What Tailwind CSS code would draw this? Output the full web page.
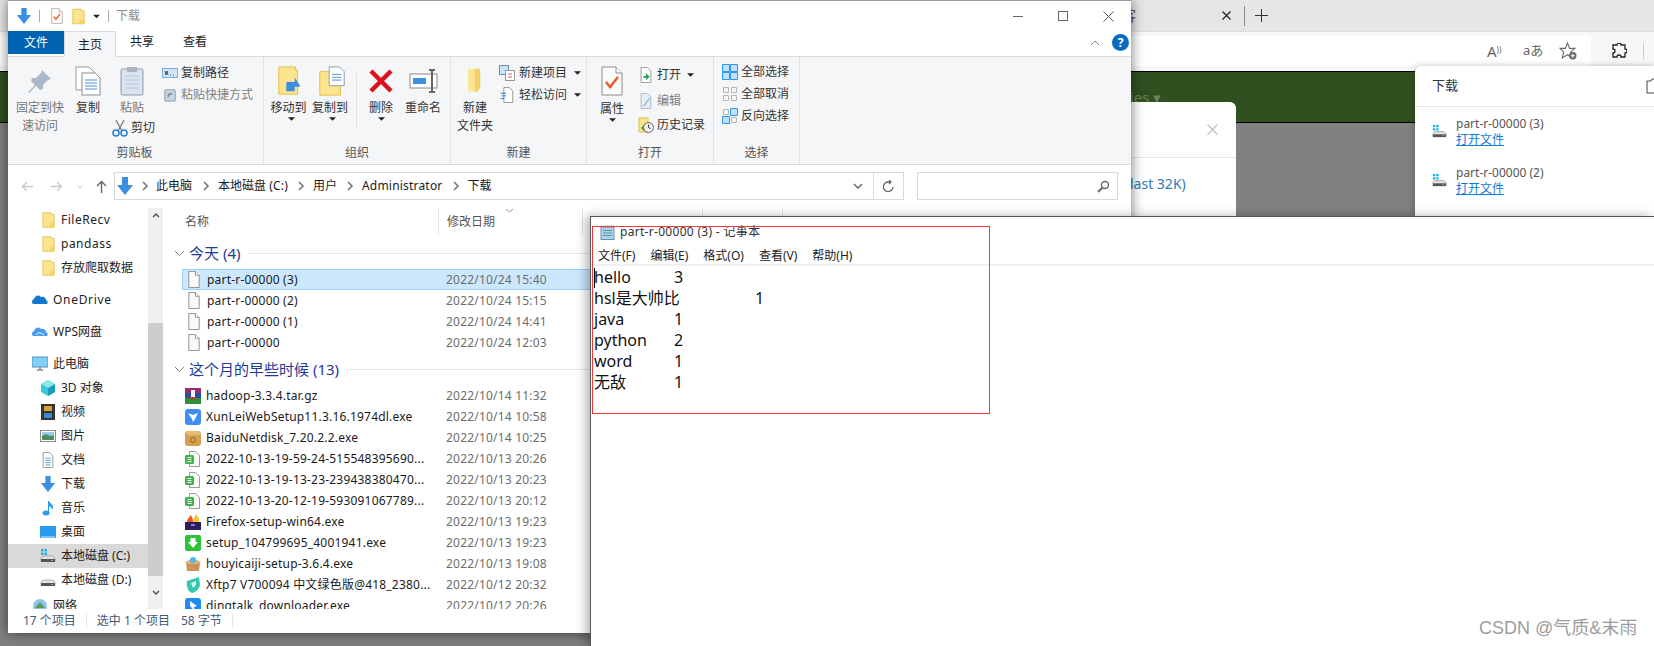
<!DOCTYPE html>
<html lang="zh-CN">
<head>
  <meta charset="UTF-8">
  <title>下载</title>
  <script src="https://cdn.jsdelivr.net/npm/@tailwindcss/browser@4"></script>
</head>
<body class="relative w-[1654px] h-[646px] overflow-hidden bg-[#808080] text-[12px] text-[#1a1a1a] font-['Noto_Sans','Noto_Sans_CJK_SC',sans-serif]">

  <!-- shared icons -->
  <svg class="hidden">
    <defs>
      <symbol id="arrow" viewBox="0 0 16 18"><path d="M5 0h6v8h5l-8 10-8-10h5z" fill="#3b8fe0"/></symbol>
      <symbol id="folder" viewBox="0 0 16 20"><path d="M1 1h10l0 2h4v16H1z" fill="#fde58f" stroke="#e2bb3f"/><path d="M10 14h5v5h-5z" fill="#f7cf5d"/></symbol>
      <symbol id="doc" viewBox="0 0 14 18"><path d="M1.500.5h7l4 4v13h-11z" fill="#f9f9f9" stroke="#8f8f8f"/><path d="M8.500.5v4h4" fill="#fff" stroke="#8f8f8f"/></symbol>
      <symbol id="sheet" viewBox="0 0 16 16"><path d="M4.500.5h6l4 4v11h-10z" fill="#fafafa" stroke="#9a9a9a"/><rect x="0" y="4" width="9" height="9" rx="1.500" fill="#3fb44d"/><path d="M2.500 6.500h4M2.500 8.500h4M2.500 10.500h4" stroke="#fff" stroke-width="1"/></symbol>
      <symbol id="caret" viewBox="0 0 8 4"><path d="M0 0h8L4 4z" fill="#222"/></symbol>
      <symbol id="chev" viewBox="0 0 8 10"><path d="M2 1l4 4-4 4" fill="none" stroke="#777" stroke-width="1.600"/></symbol>
      <symbol id="drive" viewBox="0 0 16 16"><path d="M1 10l2-2h10l2 2v3H1z" fill="#e2e2e2" stroke="#888" stroke-width=".6"/><path d="M1 11h14v3H1z" fill="#555"/><path d="M11 12h2v1h-2z" fill="#4fd34f"/></symbol>
      <symbol id="drivewin" viewBox="0 0 16 16"><path d="M1 1h2.500v2.500H1zM4.500 1H7v2.500H4.500zM1 4.500h2.500V7H1zM4.500 4.500H7V7H4.500z" fill="#14b4f0"/><path d="M1 10l2-2h10l2 2v3H1z" fill="#e2e2e2" stroke="#888" stroke-width=".6"/><path d="M1 11h14v3H1z" fill="#555"/><path d="M11 12h2v1h-2z" fill="#4fd34f"/></symbol>
      <symbol id="check" viewBox="0 0 22 30"><path d="M1 1h14l6 6v22H1z" fill="#fbfbfb" stroke="#8a8a8a"/><path d="M15 1v6h6" fill="#fff" stroke="#8a8a8a"/><path d="M5 16l4 5 8-10" fill="none" stroke="#f0571e" stroke-width="2.400"/></symbol>
      <symbol id="grid4" viewBox="0 0 16 16"><path d="M.5.500h7v7h-7zM8.500.500h7v7h-7zM.5 8.500h7v7h-7zM8.500 8.500h7v7h-7z" fill="#bfe0fb" stroke="#2f96ea"/></symbol>
      <symbol id="gridoff" viewBox="0 0 16 16"><path d="M1.500 1.500h5v5h-5zM9.500 1.500h5v5h-5zM1.500 9.500h5v5h-5zM9.500 9.500h5v5h-5z" fill="none" stroke="#b5b5b5"/></symbol>
      <symbol id="gridinv" viewBox="0 0 16 16"><path d="M1.500 1.500h5v5h-5zM9.500 9.500h5v5h-5z" fill="none" stroke="#b5b5b5"/><path d="M8.500.500h7v7h-7zM.5 8.500h7v7h-7z" fill="#bfe0fb" stroke="#2f96ea"/></symbol>
    </defs>
  </svg>

  <!-- browser behind the windows -->
  <div class="flex flex-col h-full">
    <div class="h-[32px] shrink-0 bg-[#e6e6e6] border-b border-[#dcdcdc] flex items-center pl-[1222px]">
      <span class="w-[14px] text-[14px] leading-none ml-[-100px] mr-[86px] text-[#555]">客</span>
      <svg class="size-[9px]" viewBox="0 0 9 9"><path d="M.5.500l8 8M8.500.500l-8 8" stroke="#222" stroke-width="1.300"/></svg>
      <span class="w-px h-[20px] bg-[#8a8a8a] ml-[13px]"></span>
      <svg class="size-[13px] ml-[10px]" viewBox="0 0 13 13"><path d="M6.500 0v13M0 6.500h13" stroke="#333"/></svg>
    </div>
    <div class="h-[39px] shrink-0 bg-[#f7f7f7] flex items-start pt-[4px]">
      <div class="w-[1591px] h-[30px] bg-white rounded-[4px] flex items-center justify-end pr-[14px] gap-[18px] text-[#666]">
        <span class="text-[15px] w-[18px] whitespace-nowrap">A<sup class="text-[8px]">))</sup></span>
        <span class="text-[13px] w-[18px] whitespace-nowrap">aあ</span>
        <svg class="size-[18px]" viewBox="0 0 17 17"><path d="M8 1l2 5h5l-4 3.500 1.500 5.500L8 12l-5 3 1.500-5.500L1 6h5z" fill="none" stroke="#666"/><circle cx="13" cy="13" r="3.500" fill="#666"/><path d="M11 13h4M13 11v4" stroke="#fff"/></svg>
      </div>
      <svg class="size-[16px] ml-[20px] mt-[7px]" viewBox="0 0 16 16"><path d="M6 2a2 2 0 0 1 4 0h4v4a2 2 0 0 1 0 4v4h-4a2 2 0 0 0-4 0H2v-4a2 2 0 0 0 0-4V2z" fill="none" stroke="#222" stroke-width="1.300"/></svg>
      <span class="w-px h-[16px] bg-[#ccc] ml-[16px] mt-[7px]"></span>
    </div>
    <div class="h-[52px] shrink-0 bg-[#30501f] border-y border-black flex items-center pl-[1130px] text-[#6d8060] text-[15px]">ies ▾</div>
    <div class="flex-1 bg-[#808080]"></div>
  </div>

  <!-- dialog on the site -->
  <div class="absolute left-[1000px] top-[102px] w-[236px] h-[120px] bg-white rounded-t-[6px] flex flex-col">
    <div class="h-[56px] border-b border-[#e5e5e5] flex items-center justify-end pr-[18px] text-[#c8c8c8]">
      <svg class="size-[11px]" viewBox="0 0 11 11"><path d="M.5.500l10 10M10.500.500l-10 10" stroke="#c4c4c4" stroke-width="1.500"/></svg>
    </div>
    <div class="pl-[130px] pt-[15px] text-[14px] text-[#337ab7]">last 32K)</div>
  </div>

  <!-- browser downloads panel -->
  <div class="absolute left-[1415px] top-[66px] right-0 h-[150px] bg-white rounded-tl-[6px] shadow-[0_0_6px_rgba(0,0,0,0.25)] flex flex-col">
    <div class="h-[41px] shrink-0 border-b border-[#e5e5e5] flex items-center justify-between pl-[17px] text-[13px] text-[#333]">
      <span>下载</span>
      <svg class="size-[16px] mr-[-8px]" viewBox="0 0 16 16"><path d="M1 3h4l1-2h6v14H1z" fill="none" stroke="#444"/></svg>
    </div>
    <div class="flex items-center gap-[9px] pl-[17px] h-[49px] shrink-0">
      <svg class="size-[15px]"><use href="#drivewin"/></svg>
      <div class="flex flex-col leading-[16px] text-[12px] text-[#555]">
        <span>part-r-00000 (3)</span>
        <span class="text-[#0f7ad8] underline w-fit">打开文件</span>
      </div>
    </div>
    <div class="flex items-center gap-[9px] pl-[17px] h-[49px] shrink-0">
      <svg class="size-[15px]"><use href="#drivewin"/></svg>
      <div class="flex flex-col leading-[16px] text-[12px] text-[#555]">
        <span>part-r-00000 (2)</span>
        <span class="text-[#0f7ad8] underline w-fit">打开文件</span>
      </div>
    </div>
  </div>

  <!-- file explorer -->
  <div class="absolute left-[8px] top-0 w-[1123px] h-[633px] bg-white border-t border-[#9a9a9a] shadow-[0_0_12px_rgba(0,0,0,0.55)] flex flex-col overflow-hidden">

    <!-- title bar -->
    <div class="h-[30px] shrink-0 flex items-center relative">
      <svg class="size-[16px] ml-[8px]"><use href="#arrow"/></svg>
      <span class="w-px h-[12px] bg-[#aaa] ml-[7px]"></span>
      <svg class="w-[12px] h-[16px] ml-[11px]"><use href="#check"/></svg>
      <svg class="w-[13px] h-[17px] ml-[9px]"><use href="#folder"/></svg>
      <svg class="w-[7px] h-[5px] ml-[8px]"><use href="#caret"/></svg>
      <span class="w-px h-[12px] bg-[#aaa] ml-[8px]"></span>
      <span class="ml-[7px] text-[#8a8a8a]">下载</span>
      <div class="ml-auto flex items-center gap-[35px] pr-[17px]">
        <span class="w-[10px] h-px bg-[#666]"></span>
        <span class="size-[10px] border border-[#666]"></span>
        <svg class="size-[11px]" viewBox="0 0 11 11"><path d="M.5.500l10 10M10.500.500l-10 10" stroke="#555"/></svg>
      </div>
    </div>

    <!-- ribbon tabs -->
    <div class="h-[26px] shrink-0 flex border-b border-[#dadbdc] relative">
      <div class="w-[56px] h-[23px] bg-[#0063b1] text-white flex items-center justify-center">文件</div>
      <div class="w-[52px] h-[26px] bg-[#f5f6f7] border-x border-t border-[#dadbdc] flex items-center justify-center">主页</div>
      <div class="w-[52px] flex items-center justify-center pb-[3px]">共享</div>
      <div class="w-[54px] flex items-center justify-center pb-[3px]">查看</div>
      <div class="ml-auto flex items-center gap-[12px] pr-[2px] pb-[2px]">
        <svg class="w-[10px] h-[6px]" viewBox="0 0 10 6"><path d="M1 5l4-4 4 4" fill="none" stroke="#888"/></svg>
        <span class="size-[17px] rounded-full bg-[#0a6cc0] text-white text-[12px] font-bold flex items-center justify-center">?</span>
      </div>
    </div>

    <!-- ribbon -->
    <div class="h-[108px] shrink-0 bg-[#f5f6f7] border-b border-[#dadbdc] flex text-[12px] leading-[18px] text-[#333]">

      <!-- clipboard group -->
      <div class="w-[256px] border-r border-[#e1e2e3] flex flex-col">
        <div class="h-[87px] flex pl-[6px] pt-[6px]">
          <div class="w-[52px] flex flex-col items-center text-[#777]">
            <svg class="size-[36px] p-[6px]" viewBox="0 0 24 24"><path d="M14 1l9 9-3 1-5 5 0 4-3 1-4-4-7 7-1-1 7-7-4-4 1-3 4 0 5-5z" fill="#a9b7c9"/></svg>
            <span class="whitespace-nowrap">固定到快</span><span>速访问</span>
          </div>
          <div class="w-[44px] flex flex-col items-center">
            <svg class="size-[36px] p-[3px]" viewBox="0 0 26 30"><path d="M1 1h13l5 5v18H1z" fill="#fff" stroke="#9a9a9a"/><path d="M7 7h13l5 5v17H7z" fill="#fff" stroke="#8a8a8a"/><path d="M10 14h12M10 17h12M10 20h12M10 23h12" stroke="#4c8fe0"/></svg>
            <span>复制</span>
          </div>
          <div class="w-[44px] flex flex-col items-center text-[#777]">
            <svg class="size-[36px] p-[3px]" viewBox="0 0 24 30"><rect x="1" y="3" width="22" height="26" rx="2" fill="#dbe3ee" stroke="#8d99a8"/><rect x="7" y="1" width="10" height="5" fill="#aab4c2"/><path d="M5 10h14M5 14h14M5 18h14M5 22h14" stroke="#b3c8e2"/></svg>
            <span>粘贴</span>
            <div class="flex items-center gap-[2px] mt-[2px] text-[#333] whitespace-nowrap ml-[2px]">
              <svg class="size-[18px]" viewBox="0 0 18 18"><path d="M5 1l6 11M13 1L7 12" stroke="#777" stroke-width="1.300"/><circle cx="5" cy="14" r="3" fill="none" stroke="#2b7fd0" stroke-width="1.600"/><circle cx="13" cy="14" r="3" fill="none" stroke="#2b7fd0" stroke-width="1.600"/></svg>
              <span>剪切</span>
            </div>
          </div>
          <div class="ml-[8px] mt-[-1px] flex flex-col">
            <div class="h-[22px] flex items-center gap-[3px]">
              <svg class="w-[16px] h-[10px]" viewBox="0 0 16 10"><rect x=".5" y=".5" width="15" height="9" fill="#cfe6fa" stroke="#7aaedb"/><path d="M3 3l1 4 1-4 1 4M8 7h1M11 7h1" stroke="#333" stroke-width=".8" fill="none"/></svg>
              <span>复制路径</span>
            </div>
            <div class="h-[22px] flex items-center gap-[3px] text-[#808080]">
              <svg class="w-[16px] h-[16px] p-px" viewBox="0 0 14 16"><rect x="1" y="2" width="12" height="13" rx="1" fill="#c9d3df" stroke="#8b97a6"/><path d="M5 11V7h4M6 8l3-2" stroke="#5e7286" fill="none"/></svg>
              <span class="whitespace-nowrap">粘贴快捷方式</span>
            </div>
          </div>
        </div>
        <div class="text-center text-[#555] ml-[-2px]">剪贴板</div>
      </div>

      <!-- organise group -->
      <div class="w-[187px] border-r border-[#e1e2e3] flex flex-col">
        <div class="h-[87px] flex pl-[5px] pt-[6px]">
          <div class="w-[44px] flex flex-col items-center">
            <svg class="size-[36px] p-[3px]" viewBox="0 0 30 32"><path d="M2 1h18v4h2v25H2z" fill="#fde58f" stroke="#e2bb3f"/><path d="M15 18h6v-5h9v10h-9v5z" transform="rotate(180 20 20)" fill="#3b8fe0"/></svg>
            <span class="mr-[5px] whitespace-nowrap">移动到</span>
            <svg class="w-[7px] h-[4px]"><use href="#caret"/></svg>
          </div>
          <div class="w-[38px] flex flex-col items-center">
            <svg class="size-[36px] p-[3px]" viewBox="0 0 30 32"><path d="M2 6h22v25H2z" fill="#fde58f" stroke="#e2bb3f"/><path d="M12 1h11l5 5v15H12z" fill="#fff" stroke="#8a9bb0"/><path d="M15 9h10M15 12h10M15 15h10" stroke="#4c8fe0"/></svg>
            <span class="mr-[4px] whitespace-nowrap">复制到</span>
            <svg class="w-[7px] h-[4px]"><use href="#caret"/></svg>
          </div>
          <span class="w-px h-[55px] bg-[#e1e2e3] ml-[5px] mt-[10px]"></span>
          <div class="w-[44px] ml-[2px] flex flex-col items-center">
            <svg class="size-[36px] p-[5px]" viewBox="0 0 26 26"><path d="M3 3l20 20M23 3L3 23" stroke="#dc0f1d" stroke-width="4.500"/></svg>
            <span>删除</span>
            <svg class="w-[7px] h-[4px]"><use href="#caret"/></svg>
          </div>
          <div class="w-[40px] flex flex-col items-center">
            <svg class="size-[36px]" viewBox="0 0 36 36"><rect x="5" y="11" width="27" height="14" fill="#fff" stroke="#8a8a8a"/><rect x="8" y="15" width="13" height="6" fill="#3b93e0"/><path d="M24 7h6M27 7v22M24 29h6" stroke="#666" stroke-width="2"/></svg>
            <span class="whitespace-nowrap">重命名</span>
          </div>
        </div>
        <div class="text-center text-[#555]">组织</div>
      </div>

      <!-- new group -->
      <div class="w-[136px] border-r border-[#e1e2e3] flex flex-col">
        <div class="h-[87px] flex pl-[2px] pt-[6px]">
          <div class="w-[44px] flex flex-col items-center">
            <svg class="size-[36px] p-[5px]" viewBox="0 0 24 30"><path d="M4 1h12l0 26H4z" fill="#fde58f"/><path d="M12 1h6v22l-6 6z" fill="#f6cf66"/></svg>
            <span>新建</span><span class="whitespace-nowrap">文件夹</span>
          </div>
          <div class="ml-[2px] mt-[-1px] flex flex-col">
            <div class="h-[22px] flex items-center gap-[4px]">
              <svg class="size-[16px]" viewBox="0 0 16 16"><rect x=".5" y=".5" width="9" height="9" fill="#cfe3f6" stroke="#6a8fb5"/><rect x="6.500" y="5.500" width="9" height="10" fill="#fff" stroke="#999"/><path d="M9 9h4M9 12h4" stroke="#d06060"/></svg>
              <span class="whitespace-nowrap">新建项目</span>
              <svg class="w-[7px] h-[4px] ml-[3px]"><use href="#caret"/></svg>
            </div>
            <div class="h-[22px] flex items-center gap-[4px]">
              <svg class="size-[16px]" viewBox="0 0 14 18"><path d="M3.500.5h6l4 4v13h-10z" fill="#fff" stroke="#8f8f8f"/><path d="M0 7h6M1 10h5M0 13h4" stroke="#1f6fc0"/></svg>
              <span class="whitespace-nowrap">轻松访问</span>
              <svg class="w-[7px] h-[4px] ml-[3px]"><use href="#caret"/></svg>
            </div>
          </div>
        </div>
        <div class="text-center text-[#555]">新建</div>
      </div>

      <!-- open group -->
      <div class="w-[127px] border-r border-[#e1e2e3] flex flex-col">
        <div class="h-[87px] flex pl-[5px] pt-[6px]">
          <div class="w-[40px] flex flex-col items-center">
            <svg class="size-[36px] p-[3px]"><use href="#check"/></svg>
            <span class="mt-[1px]">属性</span>
            <svg class="w-[7px] h-[4px]"><use href="#caret"/></svg>
          </div>
          <div class="ml-[6px] mt-[-1px] flex flex-col">
            <div class="h-[26px] flex items-center gap-[3px]">
              <svg class="size-[16px]" viewBox="0 0 14 18"><path d="M1.500.5h7l4 4v13h-11z" fill="#fff" stroke="#8f8f8f"/><path d="M4 10h3V7l4 4-4 4v-3H4z" fill="#22a04a"/></svg>
              <span class="whitespace-nowrap">打开</span>
              <svg class="w-[7px] h-[4px] ml-[3px]"><use href="#caret"/></svg>
            </div>
            <div class="h-[25px] flex items-center gap-[3px] text-[#808080]">
              <svg class="size-[16px]" viewBox="0 0 14 18"><path d="M1.500.5h7l4 4v13h-11z" fill="#e6edf6" stroke="#a9b6c6"/><path d="M4 15L11 6" stroke="#9db4d0" stroke-width="1.500"/></svg>
              <span class="whitespace-nowrap">编辑</span>
            </div>
            <div class="h-[24px] flex items-center gap-[3px]">
              <svg class="size-[16px]" viewBox="0 0 16 16"><path d="M1 1h9v14H1z" fill="#fde58f" stroke="#e2bb3f"/><circle cx="10.500" cy="10.500" r="5" fill="#eee" stroke="#666"/><path d="M10.500 7.500v3l2 1" stroke="#444" fill="none"/><path d="M3 11l3-3v6z" fill="#22a04a"/></svg>
              <span class="whitespace-nowrap">历史记录</span>
            </div>
          </div>
        </div>
        <div class="text-center text-[#555]">打开</div>
      </div>

      <!-- select group -->
      <div class="w-[86px] border-r border-[#e1e2e3] flex flex-col">
        <div class="h-[87px] flex flex-col pl-[8px] pt-[4px]">
          <div class="h-[22px] flex items-center gap-[3px] whitespace-nowrap"><svg class="size-[16px]"><use href="#grid4"/></svg><span>全部选择</span></div>
          <div class="h-[22px] flex items-center gap-[3px] whitespace-nowrap"><svg class="size-[16px]"><use href="#gridoff"/></svg><span>全部取消</span></div>
          <div class="h-[22px] flex items-center gap-[3px] whitespace-nowrap"><svg class="size-[16px]"><use href="#gridinv"/></svg><span>反向选择</span></div>
        </div>
        <div class="text-center text-[#555]">选择</div>
      </div>
    </div>

    <!-- address row -->
    <div class="h-[43px] shrink-0 flex items-center pl-[4px] pb-[1px]">
      <div class="w-[30px] flex justify-center"><svg class="size-[13px]" viewBox="0 0 13 13"><path d="M12 6.500H2M6 2L1.500 6.500 6 11" fill="none" stroke="#c9c9c9" stroke-width="1.400"/></svg></div>
      <div class="w-[28px] flex justify-center"><svg class="size-[13px]" viewBox="0 0 13 13"><path d="M1 6.500h10M7 2l4.500 4.500L7 11" fill="none" stroke="#c9c9c9" stroke-width="1.400"/></svg></div>
      <div class="w-[20px] flex justify-center"><svg class="w-[8px] h-[5px]" viewBox="0 0 8 5"><path d="M1 1l3 3 3-3" fill="none" stroke="#c9c9c9"/></svg></div>
      <div class="w-[22px] flex justify-center"><svg class="size-[13px]" viewBox="0 0 13 13"><path d="M6.500 13V2M2 6l4.500-4.500L11 6" fill="none" stroke="#666" stroke-width="1.400"/></svg></div>
      <div class="w-[790px] h-[28px] ml-[2px] border border-[#d9d9d9] flex items-center gap-[8px] pl-[2px]">
        <svg class="w-[16px] h-[18px]"><use href="#arrow"/></svg>
        <svg class="w-[8px] h-[10px] mr-[-1px]"><use href="#chev"/></svg>
        <span>此电脑</span>
        <svg class="w-[8px] h-[10px] ml-[2px]"><use href="#chev"/></svg>
        <span>本地磁盘 <span class="tracking-[0.2px]">(C:)</span></span>
        <svg class="w-[8px] h-[10px] ml-[1px]"><use href="#chev"/></svg>
        <span>用户</span>
        <svg class="w-[8px] h-[10px] ml-[1px]"><use href="#chev"/></svg>
        <span class="tracking-[0.2px]">Administrator</span>
        <svg class="w-[8px] h-[10px] ml-[1px]"><use href="#chev"/></svg>
        <span>下载</span>
        <svg class="w-[10px] h-[6px] ml-auto mr-[10px]" viewBox="0 0 10 6"><path d="M1 1l4 4 4-4" fill="none" stroke="#666" stroke-width="1.500"/></svg>
        <div class="w-[30px] h-full border-l border-[#d9d9d9] ml-[-8px] flex items-center justify-center">
          <svg class="size-[13px]" viewBox="0 0 13 13"><path d="M11 7a4.800 4.800 0 1 1-4.500-5h2M7 0l2 2-2 2" fill="none" stroke="#666" stroke-width="1.300"/></svg>
        </div>
      </div>
      <div class="w-[201px] h-[28px] ml-[13px] border border-[#d9d9d9] flex items-center justify-end pr-[7px]">
        <svg class="size-[13px]" viewBox="0 0 13 13"><circle cx="8" cy="5" r="3.500" fill="none" stroke="#666" stroke-width="1.400"/><path d="M5.500 7.500L1 12" stroke="#666" stroke-width="1.800"/></svg>
      </div>
    </div>

    <!-- body -->
    <div class="h-[401px] shrink-0 flex overflow-hidden">

      <!-- navigation pane -->
      <div class="w-[140px] shrink-0 flex flex-col overflow-hidden text-[#222]">
        <div class="h-[24px] shrink-0 flex items-center gap-[6px] pl-[34px]"><svg class="w-[13px] h-[16px]"><use href="#folder"/></svg><span class="tracking-[0.5px]">FileRecv</span></div>
        <div class="h-[24px] shrink-0 flex items-center gap-[6px] pl-[34px]"><svg class="w-[13px] h-[16px]"><use href="#folder"/></svg><span class="tracking-[0.5px]">pandass</span></div>
        <div class="h-[24px] shrink-0 flex items-center gap-[6px] pl-[34px]"><svg class="w-[13px] h-[16px]"><use href="#folder"/></svg><span class="whitespace-nowrap">存放爬取数据</span></div>
        <div class="h-[24px] shrink-0 mt-[8px] flex items-center gap-[5px] pl-[24px]">
          <svg class="size-[16px]" viewBox="0 0 16 16"><path d="M1 12a3 3 0 0 1 1-5 4 4 0 0 1 7-2 3.500 3.500 0 0 1 5 3 2.500 2.500 0 0 1 1 4z" fill="#1477cf"/></svg><span class="tracking-[0.7px]">OneDrive</span>
        </div>
        <div class="h-[24px] shrink-0 mt-[8px] flex items-center gap-[5px] pl-[24px]">
          <svg class="size-[16px]" viewBox="0 0 16 16"><path d="M1 12a3 3 0 0 1 1-5 4 4 0 0 1 7-2 3.500 3.500 0 0 1 5 3 2.500 2.500 0 0 1 1 4z" fill="#4a9bf0"/><path d="M4 11c2-3 4-3 8 0" fill="none" stroke="#fff"/></svg><span>WPS网盘</span>
        </div>
        <div class="h-[24px] shrink-0 mt-[8px] flex items-center gap-[5px] pl-[24px]">
          <svg class="size-[16px]" viewBox="0 0 16 16"><rect x="0" y="1" width="16" height="10" fill="#7fd0f7" stroke="#5a8fb8"/><path d="M5 14h6M8 11v3" stroke="#8a8a8a" stroke-width="1.500"/></svg><span>此电脑</span>
        </div>
        <div class="h-[24px] shrink-0 flex items-center gap-[5px] pl-[32px]">
          <svg class="size-[16px]" viewBox="0 0 16 16"><path d="M8 0l7 4v8l-7 4-7-4V4z" fill="#3cc8d8"/><path d="M8 8l7-4v8l-7 4z" fill="#1a9db5"/><path d="M8 8L1 4l7-4 7 4z" fill="#8ae6ee"/></svg><span>3D 对象</span>
        </div>
        <div class="h-[24px] shrink-0 flex items-center gap-[5px] pl-[32px]">
          <svg class="size-[16px]" viewBox="0 0 16 16"><rect x="1" y="0" width="14" height="16" fill="#333"/><rect x="4" y="2" width="8" height="5" fill="#e0a030"/><rect x="4" y="9" width="8" height="5" fill="#3a88c8"/></svg><span>视频</span>
        </div>
        <div class="h-[24px] shrink-0 flex items-center gap-[5px] pl-[32px]">
          <svg class="size-[16px]" viewBox="0 0 16 16"><rect x=".5" y="2.500" width="15" height="11" fill="#fff" stroke="#888"/><path d="M2 4h12v4H2z" fill="#9ccbe8"/><path d="M2 8l4-2 4 2 4-1v5H2z" fill="#4f8a5c"/></svg><span>图片</span>
        </div>
        <div class="h-[24px] shrink-0 flex items-center gap-[5px] pl-[32px]">
          <svg class="size-[16px]" viewBox="0 0 14 18"><path d="M1.500.5h7l4 4v13h-11z" fill="#fff" stroke="#8f8f8f"/><path d="M4 7h6M4 9.500h6M4 12h6M4 14.500h6" stroke="#4a9fd8"/></svg><span>文档</span>
        </div>
        <div class="h-[24px] shrink-0 flex items-center gap-[5px] pl-[32px]"><svg class="size-[16px]"><use href="#arrow"/></svg><span>下载</span></div>
        <div class="h-[24px] shrink-0 flex items-center gap-[5px] pl-[32px]">
          <svg class="size-[16px]" viewBox="0 0 16 16"><ellipse cx="6" cy="13" rx="3.500" ry="2.500" fill="#2b9bf0"/><path d="M8.500 13V1c1 3 5 3 4 8-1-2-2-3-3-3" fill="#2b9bf0" stroke="#2b9bf0"/></svg><span>音乐</span>
        </div>
        <div class="h-[24px] shrink-0 flex items-center gap-[5px] pl-[32px]">
          <svg class="size-[16px]" viewBox="0 0 16 16"><rect x="0" y="2" width="16" height="12" fill="#2a9cf0"/><path d="M1 13h14" stroke="#cfeaff"/></svg><span>桌面</span>
        </div>
        <div class="h-[24px] shrink-0 flex items-center gap-[5px] pl-[32px] bg-[#d9d9d9]"><svg class="size-[16px]"><use href="#drivewin"/></svg><span class="whitespace-nowrap">本地磁盘 (C:)</span></div>
        <div class="h-[24px] shrink-0 flex items-center gap-[5px] pl-[32px]"><svg class="size-[16px]"><use href="#drive"/></svg><span class="whitespace-nowrap">本地磁盘 (D:)</span></div>
        <div class="h-[24px] shrink-0 mt-[2px] flex items-center gap-[5px] pl-[24px]">
          <svg class="size-[16px]" viewBox="0 0 16 16"><circle cx="8" cy="8" r="7" fill="#8fc4ea"/><path d="M3 10l5-6 5 6" fill="#5a9a5a"/></svg><span>网络</span>
        </div>
      </div>

      <!-- scrollbar -->
      <div class="w-[15px] shrink-0 bg-[#f0f0f0] flex flex-col">
        <div class="h-[15px] flex items-center justify-center"><svg class="w-[8px] h-[5px]" viewBox="0 0 8 5"><path d="M1 4l3-3 3 3" fill="none" stroke="#555" stroke-width="1.500"/></svg></div>
        <div class="h-[100px]"></div>
        <div class="h-[253px] bg-[#cdcdcd]"></div>
        <div class="flex-1 flex items-center justify-center"><svg class="w-[8px] h-[5px]" viewBox="0 0 8 5"><path d="M1 1l3 3 3-3" fill="none" stroke="#555" stroke-width="1.500"/></svg></div>
      </div>

      <!-- file list -->
      <div class="flex-1 ml-[3px] flex flex-col overflow-hidden tracking-[0.2px]">
        <div class="h-[27px] shrink-0 flex text-[#555] tracking-normal">
          <div class="w-[273px] border-r border-[#e5e5e5] pl-[19px] flex items-center pt-[1px]">名称</div>
          <div class="w-[144px] border-r border-[#e5e5e5] pl-[8px] flex items-center relative pt-[1px]">
            修改日期
            <svg class="absolute left-[66px] top-0 w-[9px] h-[5px]" viewBox="0 0 9 5"><path d="M1 1l3.500 3L8 1" fill="none" stroke="#999"/></svg>
          </div>
          <div class="w-[120px] border-r border-[#e5e5e5]"></div>
          <div class="w-[80px] border-r border-[#e5e5e5]"></div>
        </div>

        <div class="h-[22px] mt-[7px] shrink-0 flex items-center">
          <svg class="w-[11px] h-[7px] ml-[8px]" viewBox="0 0 11 7"><path d="M1 1l4.500 4.500L10 1" fill="none" stroke="#888"/></svg>
          <span class="ml-[4px] text-[15px] tracking-normal text-[#1e3a9a] whitespace-nowrap">今天 (4)</span>
          <span class="flex-1 h-px bg-[#e5e5e5] ml-[8px]"></span>
        </div>

        <div class="h-[21px] mt-[5px] ml-[16px] shrink-0 flex items-center bg-[#cce8ff] border border-[#99d1ff] pl-[4px]">
          <svg class="w-[14px] h-[17px] mr-[6px]"><use href="#doc"/></svg><span class="w-[239px]">part-r-00000 (3)</span><span class="text-[#6d6d6d]">2022/10/24 15:40</span>
        </div>
        <div class="h-[21px] ml-[16px] shrink-0 flex items-center pl-[5px]">
          <svg class="w-[14px] h-[17px] mr-[6px]"><use href="#doc"/></svg><span class="w-[239px]">part-r-00000 (2)</span><span class="text-[#6d6d6d]">2022/10/24 15:15</span>
        </div>
        <div class="h-[21px] ml-[16px] shrink-0 flex items-center pl-[5px]">
          <svg class="w-[14px] h-[17px] mr-[6px]"><use href="#doc"/></svg><span class="w-[239px]">part-r-00000 (1)</span><span class="text-[#6d6d6d]">2022/10/24 14:41</span>
        </div>
        <div class="h-[21px] ml-[16px] shrink-0 flex items-center pl-[5px]">
          <svg class="w-[14px] h-[17px] mr-[6px]"><use href="#doc"/></svg><span class="w-[239px]">part-r-00000</span><span class="text-[#6d6d6d]">2022/10/24 12:03</span>
        </div>

        <div class="h-[22px] mt-[5px] shrink-0 flex items-center">
          <svg class="w-[11px] h-[7px] ml-[8px]" viewBox="0 0 11 7"><path d="M1 1l4.500 4.500L10 1" fill="none" stroke="#888"/></svg>
          <span class="ml-[4px] text-[15px] tracking-normal text-[#1e3a9a] whitespace-nowrap">这个月的早些时候 (13)</span>
          <span class="flex-1 h-px bg-[#e5e5e5] ml-[8px]"></span>
        </div>

        <div class="h-[21px] mt-[5px] ml-[16px] shrink-0 flex items-center pl-[3px]">
          <svg class="size-[16px] mr-[5px]" viewBox="0 0 16 16"><rect x="0" y="0" width="16" height="5" fill="#9b2a6c"/><rect x="0" y="5" width="16" height="5" fill="#2a4e9b"/><rect x="0" y="10" width="16" height="6" fill="#2f8f3a"/><rect x="6" y="2" width="4" height="8" fill="#f4f4f4"/><rect x="5" y="9" width="6" height="2" fill="#c83a2a"/></svg>
          <span class="w-[240px]">hadoop-3.3.4.tar.gz</span><span class="text-[#6d6d6d]">2022/10/14 11:32</span>
        </div>
        <div class="h-[21px] ml-[16px] shrink-0 flex items-center pl-[3px]">
          <svg class="size-[16px] mr-[5px]" viewBox="0 0 16 16"><rect width="16" height="16" rx="3" fill="#3f8cf2"/><path d="M3 4l5 2 5-2-3 6-2 3-1-3z" fill="#fff"/></svg>
          <span class="w-[240px]">XunLeiWebSetup11.3.16.1974dl.exe</span><span class="text-[#6d6d6d]">2022/10/14 10:58</span>
        </div>
        <div class="h-[21px] ml-[16px] shrink-0 flex items-center pl-[3px]">
          <svg class="size-[16px] mr-[5px]" viewBox="0 0 16 16"><rect y="1" width="16" height="15" rx="3" fill="#d7a050"/><rect x="1" y="1" width="14" height="4" rx="2" fill="#e5bd7a"/><circle cx="8" cy="10" r="2.500" fill="none" stroke="#9a6a20"/></svg>
          <span class="w-[240px]">BaiduNetdisk_7.20.2.2.exe</span><span class="text-[#6d6d6d]">2022/10/14 10:25</span>
        </div>
        <div class="h-[21px] ml-[16px] shrink-0 flex items-center pl-[3px]">
          <svg class="size-[16px] mr-[5px]"><use href="#sheet"/></svg>
          <span class="w-[240px] whitespace-nowrap">2022-10-13-19-59-24-515548395690...</span><span class="text-[#6d6d6d]">2022/10/13 20:26</span>
        </div>
        <div class="h-[21px] ml-[16px] shrink-0 flex items-center pl-[3px]">
          <svg class="size-[16px] mr-[5px]"><use href="#sheet"/></svg>
          <span class="w-[240px] whitespace-nowrap">2022-10-13-19-13-23-239438380470...</span><span class="text-[#6d6d6d]">2022/10/13 20:23</span>
        </div>
        <div class="h-[21px] ml-[16px] shrink-0 flex items-center pl-[3px]">
          <svg class="size-[16px] mr-[5px]"><use href="#sheet"/></svg>
          <span class="w-[240px] whitespace-nowrap">2022-10-13-20-12-19-593091067789...</span><span class="text-[#6d6d6d]">2022/10/13 20:12</span>
        </div>
        <div class="h-[21px] ml-[16px] shrink-0 flex items-center pl-[3px]">
          <svg class="size-[16px] mr-[5px]" viewBox="0 0 16 16"><path d="M0 8h16v8H0z" fill="#2a1f5c"/><path d="M2 8c0-4 3-4 3-7 2 1 3 3 3 7z" fill="#f05a22"/><path d="M8 8c0-3 2-5 3-8 2 3 4 5 3 8z" fill="#f9c52e"/><path d="M6 10h4v2H6z" fill="#a070e0"/></svg>
          <span class="w-[240px]">Firefox-setup-win64.exe</span><span class="text-[#6d6d6d]">2022/10/13 19:23</span>
        </div>
        <div class="h-[21px] ml-[16px] shrink-0 flex items-center pl-[3px]">
          <svg class="size-[16px] mr-[5px]" viewBox="0 0 16 16"><rect width="16" height="16" rx="2" fill="#2fc13a"/><path d="M5.500 3h5v4H13l-5 6-5-6h2.500z" fill="#fff"/></svg>
          <span class="w-[240px]">setup_104799695_4001941.exe</span><span class="text-[#6d6d6d]">2022/10/13 19:23</span>
        </div>
        <div class="h-[21px] ml-[16px] shrink-0 flex items-center pl-[3px]">
          <svg class="size-[16px] mr-[5px]" viewBox="0 0 16 16"><path d="M1 7h14l-1 8H2z" fill="#c8925a"/><path d="M0 6l4-2h8l4 2-3 2H3z" fill="#e0b080"/><circle cx="8" cy="4" r="3" fill="#4bb6e8"/></svg>
          <span class="w-[240px]">houyicaiji-setup-3.6.4.exe</span><span class="text-[#6d6d6d]">2022/10/13 19:08</span>
        </div>
        <div class="h-[21px] ml-[16px] shrink-0 flex items-center pl-[3px]">
          <svg class="size-[16px] mr-[5px]" viewBox="0 0 16 16"><path d="M2 4l12-4 1 8c-1 4-4 7-8 8-4-2-6-6-5-12z" fill="#36c6b0"/><path d="M6 6l5-2 0 4-3 3z" fill="#d8f8f0"/></svg>
          <span class="w-[240px] whitespace-nowrap">Xftp7 V700094 中文绿色版@418_2380...</span><span class="text-[#6d6d6d]">2022/10/12 20:32</span>
        </div>
        <div class="h-[21px] ml-[16px] shrink-0 flex items-center pl-[3px]">
          <svg class="size-[16px] mr-[5px]" viewBox="0 0 16 16"><rect width="16" height="16" rx="3" fill="#1f8af0"/><path d="M5 3l7 5-3 1 1 4-5-5z" fill="#fff"/></svg>
          <span class="w-[240px]">dingtalk_downloader.exe</span><span class="text-[#6d6d6d]">2022/10/12 20:26</span>
        </div>
      </div>
    </div>

    <!-- status bar -->
    <div class="h-[23px] shrink-0 bg-white flex items-center pl-[15px] text-[#3f5a78]">
      <span>17 个项目</span>
      <span class="w-px h-[14px] bg-[#e5e5e5] ml-[10px]"></span>
      <span class="ml-[10px]">选中 1 个项目</span>
      <span class="ml-[11px]">58 字节</span>
      <span class="w-px h-[14px] bg-[#e5e5e5] ml-[10px]"></span>
    </div>
  </div>

  <!-- notepad -->
  <div class="absolute left-[590px] top-[216px] right-0 bottom-0 bg-white border-l border-t border-[#555] shadow-[-4px_0_10px_rgba(0,0,0,0.3)] flex flex-col">
    <div class="h-[30px] shrink-0 flex items-center gap-[5px] pl-[9px] text-[#333]">
      <svg class="size-[15px]" viewBox="0 0 15 15"><rect x="1" y="2" width="13" height="12.500" fill="#a9d4ea" stroke="#6d8fa5"/><path d="M3 5.500h9M3 8h9M3 10.500h9" stroke="#5f90b0"/><path d="M1 1.500h13" stroke="#999" stroke-dasharray="1 1" stroke-width="2"/></svg>
      <span class="tracking-[0.3px]">part-r-00000 (3) - 记事本</span>
    </div>
    <div class="h-[19px] shrink-0 flex items-center gap-[15px] pl-[7px] border-b-2 border-[#f0f0f0] text-[#222]">
      <span>文件(F)</span><span>编辑(E)</span><span>格式(O)</span><span>查看(V)</span><span>帮助(H)</span>
    </div>
    <div class="relative pt-[1px] pl-[3px] text-[16px] leading-[21px] text-[#111]">
      <span class="absolute left-[3px] top-[2px] w-px h-[20px] bg-black"></span>
      <div class="flex h-[21px]"><span class="w-[80px]">hello</span><span>3</span></div>
      <div class="flex h-[21px]"><span class="w-[161px]">hsl是大帅比</span><span>1</span></div>
      <div class="flex h-[21px]"><span class="w-[80px]">java</span><span>1</span></div>
      <div class="flex h-[21px]"><span class="w-[80px]">python</span><span>2</span></div>
      <div class="flex h-[21px]"><span class="w-[80px]">word</span><span>1</span></div>
      <div class="flex h-[21px]"><span class="w-[80px]">无敌</span><span>1</span></div>
    </div>
  </div>

  <!-- red annotation box -->
  <div class="absolute left-[592px] top-[226px] w-[398px] h-[188px] border border-[#f03a3a]"></div>

  <!-- watermark -->
  <div class="absolute left-[1479px] top-[616px] text-[18px] leading-[24px] text-[#9c9c9c] whitespace-nowrap font-['Liberation_Sans','Noto_Sans_CJK_SC',sans-serif]">CSDN @气质&amp;末雨</div>
</body>
</html>
